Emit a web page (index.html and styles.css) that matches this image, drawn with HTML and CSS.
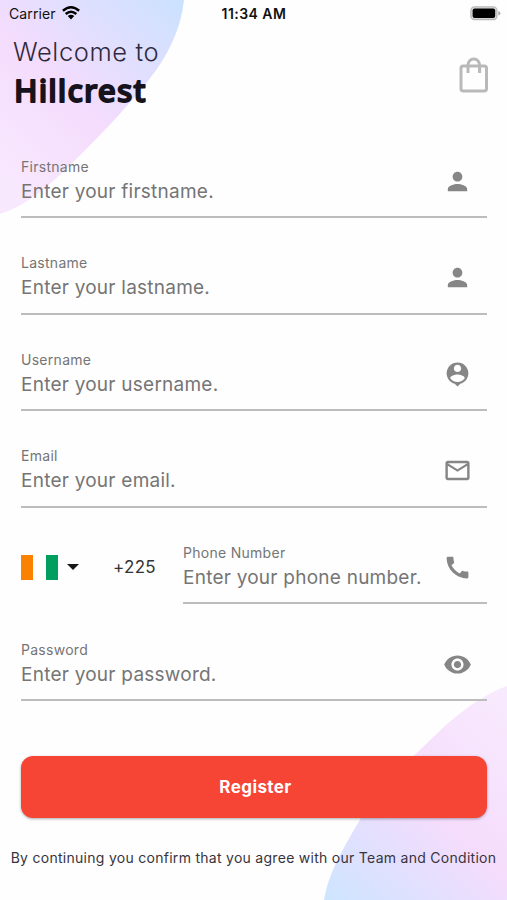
FILE: index.html
```html
<!DOCTYPE html>
<html lang="en">
<head>
<meta charset="utf-8">
<meta name="viewport" content="width=device-width, initial-scale=1">
<title>Register</title>
<link rel="stylesheet" href="styles.css">
</head>
<body>
<div class="screen">
  <svg class="backdrop" viewBox="0 0 507 900" aria-hidden="true">
    <defs>
      <linearGradient id="top" gradientUnits="userSpaceOnUse" x1="190" y1="0" x2="15" y2="190">
        <stop offset="0" stop-color="#c9e2ff"/><stop offset=".3" stop-color="#dfdffe"/><stop offset=".58" stop-color="#f4dcfd"/><stop offset="1" stop-color="#f8e8fe"/>
      </linearGradient>
      <linearGradient id="bottom" gradientUnits="userSpaceOnUse" x1="325" y1="900" x2="500" y2="705">
        <stop offset="0" stop-color="#cde5ff"/><stop offset=".28" stop-color="#e2e0fe"/><stop offset=".52" stop-color="#f5dcfc"/><stop offset="1" stop-color="#f8e9fe"/>
      </linearGradient>
    </defs>
    <path fill="url(#top)" d="M0 0H184C181 29 168 56 148 81C123 112 95 141 69 166C47 188 24 207 0 214Z"/>
    <path fill="url(#bottom)" d="M507 686C472 699 444 726 417 753C391 778 371 799 358 823C341 852 328 875 324 900H507Z"/>
  </svg>

  <header class="status">
    <div class="carrier"><span class="carrier-name">Carrier</span>
      <svg class="wifi" viewBox="0 0 18 14"><path fill="none" stroke="#000" stroke-width="2.5" d="M.9 4.8Q9-2.2 17.1 4.8M3.7 8Q9 3.4 14.3 8"/><path d="M5.8 10.1Q9 7.4 12.2 10.1L9 13.5Z"/></svg>
    </div>
    <span class="time">11:34 AM</span>
    <svg class="battery" viewBox="0 0 31 15"><rect x=".9" y=".9" width="26" height="12.6" rx="3.6" fill="#ddd" stroke="#b8b8b8" stroke-width="1.3"/><rect x="2.6" y="2.5" width="22.6" height="9.4" rx="2" fill="#000"/><path fill="#aaa" d="M28.3 5Q30.4 5.5 30.4 7.2T28.3 9.5Z"/></svg>
  </header>

  <div class="heading">
    <h1 class="title"><span class="welcome">Welcome to</span>
      <svg class="brand" viewBox="0 0 150 48"><text x="1" y="32">Hillcrest</text></svg></h1>
    <svg class="bag" viewBox="0 0 30 36"><g fill="none" stroke="#b9b9b9" stroke-width="3"><rect x="2" y="9" width="25.5" height="25" rx="2.2"/><path d="M9 16V8A5.8 6 0 0 1 20.6 8V16"/></g></svg>
  </div>

  <main class="form">
    <label class="field"><span class="copy"><span class="label">Firstname</span><span class="hint">Enter your firstname.</span></span>
      <svg class="icon" viewBox="0 0 24 24"><path d="M12 12c2.21 0 4-1.79 4-4s-1.79-4-4-4-4 1.79-4 4 1.79 4 4 4zm0 2c-2.67 0-8 1.34-8 4v2h16v-2c0-2.66-5.33-4-8-4z"/></svg></label>
    <label class="field"><span class="copy"><span class="label">Lastname</span><span class="hint">Enter your lastname.</span></span>
      <svg class="icon" viewBox="0 0 24 24"><path d="M12 12c2.21 0 4-1.79 4-4s-1.79-4-4-4-4 1.79-4 4 1.79 4 4 4zm0 2c-2.67 0-8 1.34-8 4v2h16v-2c0-2.66-5.33-4-8-4z"/></svg></label>
    <label class="field"><span class="copy"><span class="label">Username</span><span class="hint">Enter your username.</span></span>
      <svg class="icon" viewBox="0 0 24 24"><path d="M12 2C7.03 2 3 6.03 3 11c0 4.17 2.84 7.67 6.69 8.69L12 22l2.31-2.31C18.16 18.67 21 15.17 21 11c0-4.97-4.03-9-9-9zm0 2c1.66 0 3 1.34 3 3s-1.34 3-3 3-3-1.34-3-3 1.34-3 3-3zm0 14.3c-2.5 0-4.71-1.28-6-3.22.03-1.99 4-3.08 6-3.08 1.99 0 5.97 1.09 6 3.08-1.29 1.94-3.5 3.22-6 3.22z"/></svg></label>
    <label class="field"><span class="copy"><span class="label">Email</span><span class="hint">Enter your email.</span></span>
      <svg class="icon" viewBox="0 0 24 24"><path d="M22 6c0-1.1-.9-2-2-2H4c-1.1 0-2 .9-2 2v12c0 1.1.9 2 2 2h16c1.1 0 2-.9 2-2V6zm-2 0-8 5-8-5h16zm0 12H4V8l8 5 8-5v10z"/></svg></label>
    <div class="phone-row">
      <div class="country"><span class="flag"></span><span class="caret"></span><span class="code">+225</span></div>
      <label class="field"><span class="copy"><span class="label">Phone Number</span><span class="hint">Enter your phone number.</span></span>
        <svg class="icon" viewBox="0 0 24 24"><path d="M20.01 15.38c-1.23 0-2.42-.2-3.53-.56-.35-.12-.74-.03-1.01.24l-1.57 1.97c-2.83-1.35-5.48-3.9-6.89-6.83l1.95-1.66c.27-.28.35-.67.24-1.02-.37-1.11-.56-2.3-.56-3.53 0-.54-.45-.99-.99-.99H4.19C3.65 3 3 3.24 3 3.99 3 13.28 10.73 21 20.01 21c.71 0 .99-.63.99-1.18v-3.45c0-.54-.45-.99-.99-.99z"/></svg></label>
    </div>
    <label class="field"><span class="copy"><span class="label">Password</span><span class="hint">Enter your password.</span></span>
      <svg class="icon" viewBox="0 0 24 24"><path d="M12 4.5C7 4.5 2.73 7.61 1 12c1.73 4.39 6 7.5 11 7.5s9.27-3.11 11-7.5c-1.73-4.39-6-7.5-11-7.5zM12 17c-2.76 0-5-2.24-5-5s2.24-5 5-5 5 2.24 5 5-2.24 5-5 5zm0-8c-1.66 0-3 1.34-3 3s1.34 3 3 3 3-1.34 3-3-1.34-3-3-3z"/></svg></label>
    <button class="register" type="button">Register</button>
  </main>
  <p class="terms">By continuing you confirm that you agree with our Team and Condition</p>
</div>
</body>
</html>
```

FILE: styles.css
```css
* { box-sizing: border-box; }
body { margin: 0; background: #fff; font-family: Inter, "Liberation Sans", sans-serif; }
.screen { position: relative; isolation: isolate; width: 507px; height: 900px; overflow: hidden; background: #fefefe; }
.backdrop { position: absolute; inset: 0; z-index: -1; width: 507px; height: 900px; }
.status { display: grid; grid-template-columns: 1fr auto 1fr; align-items: center; height: 28px; padding: 0 6px 0 7px; color: #111; }
.carrier { display: flex; align-items: center; gap: 6px; padding-left: 2px; font-size: 14px; line-height: 28px; letter-spacing: .1px; }
.wifi { width: 18px; height: 14px; margin-top: -2px; }
.time { margin-top: -1px; font-size: 14px; font-weight: 600; letter-spacing: .45px; }
.battery { width: 31px; height: 15px; justify-self: end; margin-top: -1px; }
.heading { display: flex; justify-content: space-between; height: 93.4px; padding: 6px 18px 0 13px; }
.title { display: flex; flex-direction: column; margin: 0; }
.welcome { font: 300 25.5px/36px Inter, sans-serif; letter-spacing: .6px; color: #302a3b; }
.brand { width: 150px; height: 48px; overflow: visible; fill: #17131c; stroke: #17131c; stroke-width: 1.8px; stroke-linejoin: round; font: 500 31.5px "Noto Sans", sans-serif; letter-spacing: 1.1px; }
.bag { width: 30px; height: 36px; margin-top: 22.5px; }
.form { padding: 0 20px 0 21px; }
.field { display: flex; justify-content: space-between; height: 96.6px; padding: 35.2px 15px 0 0; border-bottom: 2px solid #bcbcbc; }
.copy { display: flex; flex-direction: column; white-space: nowrap; color: #757575; }
.label { font-size: 14px; line-height: 20px; letter-spacing: .28px; }
.hint { margin-top: 1px; font-size: 19px; line-height: 28px; letter-spacing: .24px; }
.icon { width: 29px; height: 29px; margin-top: 10px; fill: #868686; }
.phone-row { display: grid; grid-template-columns: 162px 1fr; }
.country { display: flex; align-items: center; height: 26px; margin-top: 46.4px; }
.flag { width: 37px; height: 25px; background: linear-gradient(90deg, #fb8200 0 33.3%, #fff 33.3% 66.6%, #009f60 66.6%); }
.caret { margin-left: 9px; border: 6px solid transparent; border-top-color: #161616; border-bottom: 0; }
.code { margin-left: 34px; font-size: 17px; letter-spacing: .3px; color: #333; }
.register { display: block; width: 100%; height: 62px; margin-top: 55px; padding: 0; border: 0; border-radius: 12px; background: #f64435; color: #fff; font: 700 17px/62px Inter, sans-serif; letter-spacing: .4px; text-indent: 3px; box-shadow: 0 1px 3px #0005; }
.terms { margin: 30px 0 0; font-size: 14px; line-height: 20px; letter-spacing: .28px; text-align: center; white-space: nowrap; color: #38343d; }
```
